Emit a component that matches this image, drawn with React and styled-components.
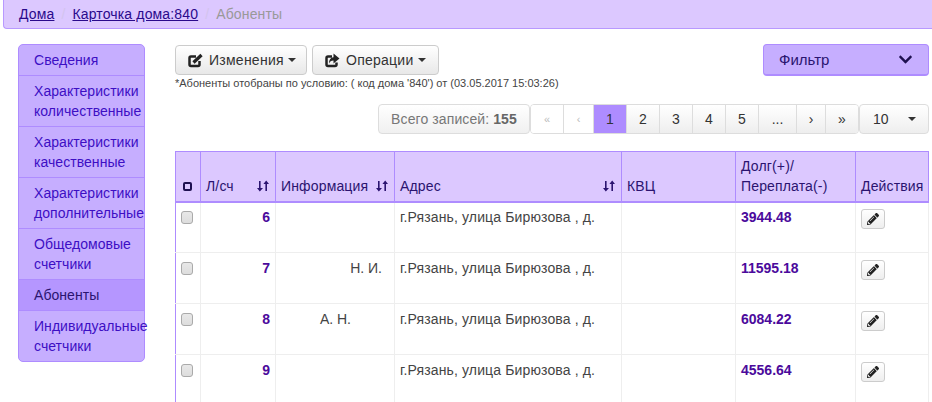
import React from "react";
import styled, { createGlobalStyle } from "styled-components";
import { FaChevronDown, FaPencilAlt } from "react-icons/fa";

const Global = createGlobalStyle`
  html, body { margin: 0; padding: 0; background: #fff; overflow: hidden; }
  body { width: 932px; height: 402px; font-family: "Liberation Sans", Arial, sans-serif; font-size: 14px; color: #333; }
`;

const Page = styled.div`
  width: 932px;
  height: 402px;
  overflow: hidden;
  padding-left: 3px;
  box-sizing: border-box;
`;

const Crumbs = styled.nav`
  height: 29px;
  box-sizing: border-box;
  background: #dcc8ff;
  border: 1px solid #b899ff;
  border-top: 0;
  border-right: 0;
  border-bottom-left-radius: 4px;
  padding: 4px 0 0 15px;
  display: flex;
  line-height: 20px;
  letter-spacing: 0.15px;
`;

const Crumb = styled.a`
  color: #2a0a8c;
  text-decoration: underline;
`;

const CrumbSep = styled.span`
  color: #d3c4ee;
  width: 18px;
  text-align: center;
`;

const CrumbActive = styled.span`
  color: #999;
`;

const Body = styled.div`
  display: flex;
  padding: 15px 0 0 15px;
  align-items: flex-start;
`;

const Side = styled.ul`
  list-style: none;
  margin: 0;
  padding: 0;
  width: 127px;
  box-sizing: border-box;
  background: #c6aeff;
  border: 1px solid #ae8cff;
  border-radius: 5px;
  flex: none;
`;

const SideItem = styled.li`
  padding: 5px 0 5px 15px;
  line-height: 20px;
  white-space: nowrap;
  letter-spacing: 0.05px;
  color: ${p => (p.$active ? "#2b1470" : "#3d0fc4")};
  background: ${p => (p.$active ? "#b596ff" : "transparent")};
  border-top: ${p => (p.$first ? "0" : "1px solid #ae8cff")};
  ${p => p.$first && "height: 20px;"}
`;

const Main = styled.div`
  margin-left: 30px;
  width: 757px;
  flex: none;
`;

const Top = styled.div`
  display: flex;
  justify-content: space-between;
  align-items: flex-start;
  padding-top: 1px;
  padding-right: 3px;
`;

const BtnGroup = styled.div`
  display: flex;
  gap: 5px;
`;

const Btn = styled.button`
  width: ${p => p.$w}px;
  height: 30px;
  box-sizing: border-box;
  padding: 0 0 0 12px;
  display: flex;
  align-items: center;
  gap: 6px;
  font: inherit;
  letter-spacing: 0.25px;
  color: #333;
  background: linear-gradient(#fff, #e8e8e8);
  border: 1px solid #ccc;
  border-radius: 4px;
  svg { flex: none; }
`;

const Caret = styled.i`
  display: inline-block;
  width: 0;
  height: 0;
  border-top: 4px solid #333;
  border-left: 4px solid transparent;
  border-right: 4px solid transparent;
  margin-left: -2px;
`;

const Note = styled.div`
  font-size: 11px;
  line-height: 14px;
  margin-top: 1px;
  color: #444;
  white-space: nowrap;
`;

const Filter = styled.button`
  width: 166px;
  height: 32px;
  margin-top: -1px;
  box-sizing: border-box;
  background: #c6aeff;
  border: 1px solid #ae8cff;
  border-bottom-width: 2px;
  border-radius: 4px;
  font: inherit;
  font-size: 15px;
  color: #2b1470;
  padding: 0 15px;
  display: flex;
  justify-content: space-between;
  align-items: center;
  svg { color: #1e1050; }
`;

const PagerRow = styled.div`
  display: flex;
  justify-content: flex-end;
  height: 30px;
  margin: 14px 3px 17px 0;
`;

const Total = styled.div`
  width: 152px;
  box-sizing: border-box;
  height: 30px;
  line-height: 28px;
  text-align: center;
  letter-spacing: 0.1px;
  color: #777;
  border: 1px solid #ddd;
  border-radius: 4px;
  background: linear-gradient(#fff, #f0f0f0);
  b { color: #666; }
`;

const Pager = styled.div`
  display: flex;
  border: 1px solid #ddd;
  border-radius: 4px;
  box-sizing: border-box;
  height: 30px;
  overflow: hidden;
`;

const PageCell = styled.div`
  width: ${p => p.$w}px;
  box-sizing: border-box;
  line-height: 28px;
  text-align: center;
  color: ${p => (p.$muted ? "#bbb" : "#333")};
  background: ${p => (p.$active ? "#ae8cff" : p.$muted ? "#fff" : "linear-gradient(#fff, #eee)")};
  border-right: 1px solid #ddd;
  font-size: ${p => (p.$small ? "11px" : "14px")};
  &:last-child { border-right: 0; }
`;

const PageSize = styled.div`
  width: 70px;
  height: 30px;
  box-sizing: border-box;
  padding: 0 12px 0 13px;
  display: flex;
  justify-content: space-between;
  align-items: center;
  border: 1px solid #ddd;
  border-radius: 4px;
  background: linear-gradient(#fff, #eee);
  i { margin: 0; }
`;

const Table = styled.table`
  border-collapse: collapse;
  table-layout: fixed;
  width: 753px;
  tbody tr:first-child td { padding-top: 4px; }
`;

const Head = styled.th`
  height: 50px;
  box-sizing: border-box;
  background: #dcc8ff;
  font-weight: normal;
  text-align: left;
  vertical-align: bottom;
  padding: 0 5px 5px;
  line-height: 20px;
  letter-spacing: 0.15px;
  border: 2px solid #ae8cff;
  border-width: 1px 1px 2px 1px;
  color: #2b1470;
  position: relative;
  white-space: nowrap;
  &:first-child { padding: 0 0 10px 7px; }
`;

const HeadInner = styled.div`
  display: flex;
  justify-content: space-between;
  align-items: center;
  padding-right: ${p => p.$pr || 0}px;
`;

const Cell = styled.td`
  height: 51px;
  box-sizing: border-box;
  vertical-align: top;
  padding: 5px 5px 0;
  border: 1px solid #eee;
  border-top: 0;
  line-height: 20px;
  font-size: 14px;
  letter-spacing: ${p => (p.$tracked ? "0.13px" : "0")};
  color: #444;
  text-align: ${p => p.$align || "left"};
  white-space: nowrap;
  overflow: hidden;
  padding-right: ${p => p.$pr || 5}px;
  &:first-child { padding-left: 5px; border-left: 1px solid #ae8cff; }
`;

const Amount = styled.b`
  color: #4b0a9c;
  font-size: 14px;
`;

const HeadBox = styled.span`
  display: block;
  width: 9px;
  height: 9px;
  box-sizing: border-box;
  border: 2px solid #1e1050;
  border-radius: 2px;
`;

const RowBox = styled.span`
  display: block;
  width: 12px;
  height: 13px;
  margin-top: 4px;
  box-sizing: border-box;
  background: linear-gradient(#e8e8e8, #ddd);
  border: 1px solid #aaa;
  border-radius: 3px;
`;

const EditBtn = styled.button`
  width: 24px;
  height: 20px;
  margin-top: 2px;
  padding: 0;
  display: flex;
  align-items: center;
  justify-content: center;
  background: linear-gradient(#fff, #eee);
  border: 1px solid #ccc;
  border-radius: 3px;
  color: #222;
`;

const SortIcon = () => (
  <svg width="12" height="12" viewBox="0 0 12 12" fill="#2b1470">
    <path d="M2 1h1.600v7H6L2.800 11.500 0 8h2z" />
    <path d="M8.400 11h1.600V4h2L9.200.5 6.400 4h2z" />
  </svg>
);

const EditIcon = () => (
  <svg width="15" height="15" viewBox="0 0 15 15" fill="none" stroke="#222">
    <path d="M8 3.500H3a1.500 1.500 0 0 0-1.500 1.500v6.500A1.500 1.500 0 0 0 3 13h7a1.500 1.500 0 0 0 1.500-1.500V8" strokeWidth="2.500" />
    <path d="M5.500 9.500 13.500 2" strokeWidth="3.200" />
  </svg>
);

const ShareIcon = () => (
  <svg width="15" height="15" viewBox="0 0 15 15" fill="none" stroke="#222">
    <path d="M7 3.500H3a1.500 1.500 0 0 0-1.500 1.500v6.500A1.500 1.500 0 0 0 3 13h7a1.500 1.500 0 0 0 1.500-1.500V9.500" strokeWidth="2.500" />
    <path d="M8.500.500l6 5-6 5V7.500c-2.500 0-3.500 1-4.500 3 0-3.500 1.500-6 4.500-6.300z" fill="#222" stroke="none" />
  </svg>
);

const rows = [
  { id: 6, info: "", debt: "3944.48" },
  { id: 7, info: "Н. И.", debt: "11595.18", pr: 12 },
  { id: 8, info: "А. Н.", debt: "6084.22", pr: 43 },
  { id: 9, info: "", debt: "4556.64" },
];

export default function App() {
  return (
    <Page>
      <Global />
      <Crumbs>
        <Crumb>Дома</Crumb>
        <CrumbSep>/</CrumbSep>
        <Crumb>Карточка дома:840</Crumb>
        <CrumbSep>/</CrumbSep>
        <CrumbActive>Абоненты</CrumbActive>
      </Crumbs>
      <Body>
        <Side>
          <SideItem $first>Сведения</SideItem>
          <SideItem>Характеристики<br />количественные</SideItem>
          <SideItem>Характеристики<br />качественные</SideItem>
          <SideItem>Характеристики<br />дополнительные</SideItem>
          <SideItem>Общедомовые<br />счетчики</SideItem>
          <SideItem $active>Абоненты</SideItem>
          <SideItem>Индивидуальные<br />счетчики</SideItem>
        </Side>
        <Main>
          <Top>
            <div>
              <BtnGroup>
                <Btn $w={132}><EditIcon />Изменения<Caret /></Btn>
                <Btn $w={127}><ShareIcon />Операции<Caret /></Btn>
              </BtnGroup>
              <Note>*Абоненты отобраны по условию: ( код дома '840') от (03.05.2017 15:03:26)</Note>
            </div>
            <Filter>Фильтр<FaChevronDown size={15} /></Filter>
          </Top>
          <PagerRow>
            <Total>Всего записей: <b>155</b></Total>
            <Pager>
              <PageCell $w={33} $muted $small>«</PageCell>
              <PageCell $w={30} $muted $small>‹</PageCell>
              <PageCell $w={33} $active>1</PageCell>
              <PageCell $w={33}>2</PageCell>
              <PageCell $w={33}>3</PageCell>
              <PageCell $w={33}>4</PageCell>
              <PageCell $w={33}>5</PageCell>
              <PageCell $w={38}>...</PageCell>
              <PageCell $w={29}>›</PageCell>
              <PageCell $w={32}>»</PageCell>
            </Pager>
            <PageSize>10<Caret /></PageSize>
          </PagerRow>
          <Table>
            <colgroup>
              <col style={{ width: 25 }} />
              <col style={{ width: 75 }} />
              <col style={{ width: 119 }} />
              <col style={{ width: 227 }} />
              <col style={{ width: 114 }} />
              <col style={{ width: 120 }} />
              <col style={{ width: 73 }} />
            </colgroup>
            <thead>
              <tr>
                <Head><HeadBox /></Head>
                <Head><HeadInner $pr={1}>Л/сч<SortIcon /></HeadInner></Head>
                <Head><HeadInner $pr={1}>Информация<SortIcon /></HeadInner></Head>
                <Head><HeadInner $pr={1}>Адрес<SortIcon /></HeadInner></Head>
                <Head>КВЦ</Head>
                <Head>Долг(+)/<br />Переплата(-)</Head>
                <Head>Действия</Head>
              </tr>
            </thead>
            <tbody>
              {rows.map(r => (
                <tr key={r.id}>
                  <Cell><RowBox /></Cell>
                  <Cell $align="right"><Amount>{r.id}</Amount></Cell>
                  <Cell $align="right" $pr={r.pr}>{r.info}</Cell>
                  <Cell $tracked>г.Рязань, улица Бирюзова , д.</Cell>
                  <Cell />
                  <Cell><Amount>{r.debt}</Amount></Cell>
                  <Cell><EditBtn><FaPencilAlt size={12} /></EditBtn></Cell>
                </tr>
              ))}
            </tbody>
          </Table>
        </Main>
      </Body>
    </Page>
  );
}
